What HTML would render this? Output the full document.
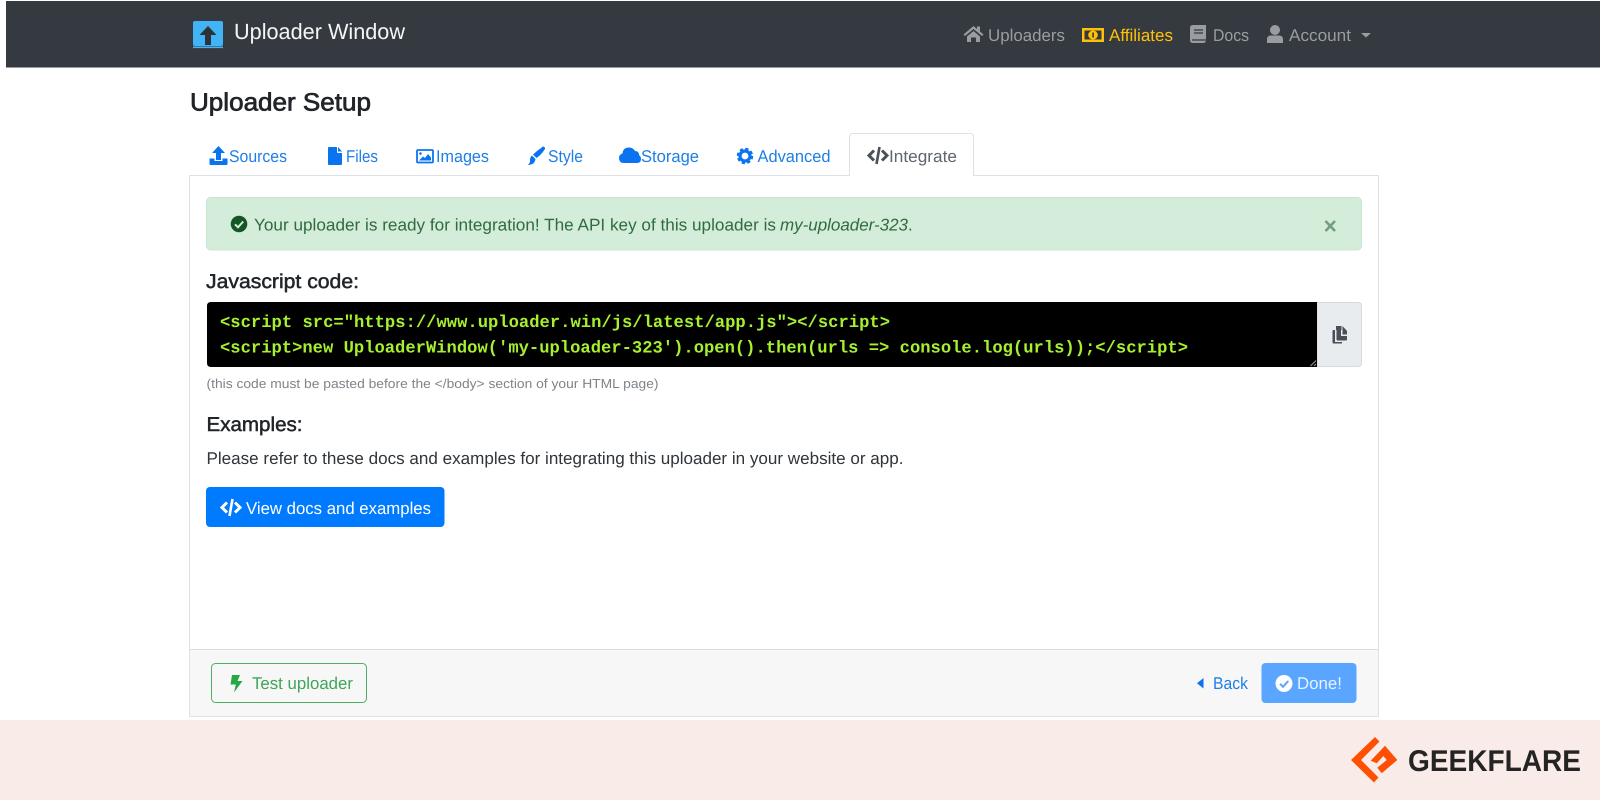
<!DOCTYPE html>
<html lang="en"><head><meta charset="utf-8"><title>Uploader Setup</title>
<style>
html,body{margin:0;padding:0;background:#fff;width:1600px;height:800px;overflow:hidden}
svg{display:block}
text{font-family:"Liberation Sans",sans-serif;font-size:17px;text-rendering:geometricPrecision}
.c{font-family:"Liberation Mono",monospace;font-weight:700;font-size:17.2px;fill:#a6f02f}
.l{fill:#1f7fe6}.n{fill:#9a9da0}.h{fill:#212529;stroke:#212529;stroke-width:.7px}
</style></head><body>
<svg width="1600" height="800" viewBox="0 0 1600 800" xmlns="http://www.w3.org/2000/svg">
<defs><g id="code"><path d="M7 3.500 L2 8.500 L7 13.500 M15 3.500 L20 8.500 L15 13.500" fill="none" stroke="currentColor" stroke-width="3"/><path d="M12.500 0 L9.500 17" stroke="currentColor" stroke-width="2.600"/></g></defs>
<rect width="1600" height="800" fill="#fff"/>
<!-- navbar -->
<rect x="6" y="1" width="1594" height="66.500" fill="#343a40"/>
<rect x="193" y="21" width="30" height="25" rx="2" fill="#42b4f5"/><rect x="193" y="46.500" width="30" height="1.600" fill="#42b4f5"/>
<path d="M208 26 L216.500 35 H211 V45 H205 V35 H199.500 Z" fill="#2b3238"/>
<text x="234" y="39" style="font-size:22px" fill="#f4f5f5" textLength="171" lengthAdjust="spacingAndGlyphs">Uploader Window</text>
<path d="M973.500 26 L977 29 V26.500 H980 V31.500 L983.500 34.500 L982 36 L973.500 29 L965 36 L963.500 34.500 Z M973.500 31 L980 36.500 V42 H976 V37.500 H971 V42 H967 V36.500 Z" fill="#9a9da0"/>
<text class="n" x="988" y="41" textLength="77" lengthAdjust="spacingAndGlyphs">Uploaders</text>
<rect x="1082" y="28" width="22" height="14" fill="#ffc107"/><rect x="1084.500" y="30.500" width="17" height="9" fill="#343a40"/><ellipse cx="1093" cy="35" rx="4.800" ry="4.500" fill="#ffc107"/><rect x="1092.300" y="32.500" width="1.600" height="5" fill="#343a40"/>
<text x="1109" y="41" fill="#ffc107" textLength="64" lengthAdjust="spacingAndGlyphs">Affiliates</text>
<path d="M1193 25 H1206 V40 Q1206 43 1203 43 H1193 Q1190 43 1190 40 V28 Q1190 25 1193 25 Z" fill="#9a9da0"/><path d="M1194 30 H1203 M1194 33 H1203 M1192 40 H1206" stroke="#343a40" stroke-width="1.300"/>
<text class="n" x="1213" y="41" textLength="36" lengthAdjust="spacingAndGlyphs">Docs</text>
<circle cx="1275" cy="30" r="5" fill="#9a9da0"/><path d="M1267 43 V39.500 Q1267 35.500 1271 35.500 H1279 Q1283 35.500 1283 39.500 V43 Z" fill="#9a9da0"/>
<text class="n" x="1289" y="41" textLength="62" lengthAdjust="spacingAndGlyphs">Account</text>
<path d="M1361 33 H1371 L1366 37.500 Z" fill="#9a9da0"/>
<!-- heading -->
<text class="h" x="190" y="110.500" style="font-size:25px" textLength="181" lengthAdjust="spacingAndGlyphs">Uploader Setup</text>
<!-- panel -->
<rect x="189.500" y="175.500" width="1189" height="541" fill="#fff" stroke="#dee2e6"/>
<rect x="190" y="649" width="1188" height="67" fill="#f7f7f7"/><path d="M190 649.500 H1378" stroke="#dcdcdc"/>
<!-- tabs -->
<path d="M849.500 176 V137 Q849.500 133.500 853 133.500 H970 Q973.500 133.500 973.500 137 V176" fill="#fff" stroke="#dee2e6"/>
<path d="M218.500 146 L225 153 H221 V160 H216 V153 H212 Z M209.500 158.500 H214.500 V161 H222.500 V158.500 H227.500 V164 Q227.500 165 226.500 165 H210.500 Q209.500 165 209.500 164 Z" fill="#0a74f0"/>
<text class="l" x="229" y="162" textLength="58" lengthAdjust="spacingAndGlyphs">Sources</text>
<path d="M328 148 Q328 147 329 147 H337 V152 Q337 153 338 153 H342 V164 Q342 165 341 165 H329 Q328 165 328 164 Z M338 147 L342 151.500 H338 Z" fill="#0a74f0"/>
<text class="l" x="346" y="162" textLength="32" lengthAdjust="spacingAndGlyphs">Files</text>
<rect x="417" y="150" width="16" height="12.500" rx="1" fill="none" stroke="#0a74f0" stroke-width="1.800"/><circle cx="420.500" cy="153.500" r="1.300" fill="#0a74f0"/><path d="M419 160.500 L423 156.500 L425 158 L428 154 L431 157.500 V160.500 Z" fill="#0a74f0"/>
<text class="l" x="436" y="162" textLength="53" lengthAdjust="spacingAndGlyphs">Images</text>
<path d="M543 146.500 Q545.500 147 545 149 Q541 155 536.500 158 L533 154.500 Q538 150 543 146.500 Z M532 155.500 L535.500 159 Q535 164 530 164.800 Q528.500 165 528 164.500 Q530.500 163 530 160 Q530 157 532 155.500 Z" fill="#0a74f0"/>
<text class="l" x="548" y="162" textLength="35" lengthAdjust="spacingAndGlyphs">Style</text>
<path d="M624 163 Q619 163 619 158 Q619 154.500 622.500 153.500 Q623 147.500 629 147.500 Q633 147.500 635 151 Q639 151 639 155 Q641 156.500 641 159 Q641 163 637 163 Z" fill="#0a74f0"/>
<text class="l" x="641" y="162" textLength="58" lengthAdjust="spacingAndGlyphs">Storage</text>
<circle cx="745" cy="156" r="5" fill="none" stroke="#0a74f0" stroke-width="3.200"/><circle cx="745" cy="156" r="7" fill="none" stroke="#0a74f0" stroke-width="2.500" stroke-dasharray="3.200 2.300"/>
<text class="l" x="757.500" y="162" textLength="73" lengthAdjust="spacingAndGlyphs">Advanced</text>
<use href="#code" x="867" y="147" color="#495057"/>
<text x="889" y="162" fill="#5f666d" textLength="68" lengthAdjust="spacingAndGlyphs">Integrate</text>
<!-- alert -->
<rect x="206.500" y="197.500" width="1155" height="52.500" rx="4" fill="#d4edda" stroke="#c8e6cf"/>
<circle cx="239" cy="224" r="8.300" fill="#155724"/><path d="M235 224.300 L238 227.300 L243.200 221.500" fill="none" stroke="#d4edda" stroke-width="2"/>
<text x="254" y="230.500" fill="#2f6b3d" textLength="522" lengthAdjust="spacingAndGlyphs">Your uploader is ready for integration! The API key of this uploader is</text>
<text x="780" y="230.500" fill="#2f6b3d" font-style="italic" textLength="128" lengthAdjust="spacingAndGlyphs">my-uploader-323</text>
<text x="908" y="230.500" fill="#2f6b3d">.</text>
<path d="M1325.500 221 L1335 231 M1335 221 L1325.500 231" stroke="#6f9f7c" stroke-width="2.600"/>
<!-- code -->
<text class="h" x="206" y="288" style="font-size:20px;stroke-width:.5px" textLength="153" lengthAdjust="spacingAndGlyphs">Javascript code:</text>
<path d="M1317 302.500 H1358 Q1361.500 302.500 1361.500 306 V363 Q1361.500 366.500 1358 366.500 H1317 Z" fill="#e9ecef" stroke="#d6dade"/>
<path d="M211 302 H1317 V367 H211 Q207 367 207 363 V306 Q207 302 211 302 Z" fill="#000"/>
<path d="M1310.500 366 L1316 360.500 M1314 366 L1316 364" stroke="#9a9a9a" stroke-width="1"/>
<text class="c" x="220" y="327" textLength="670" lengthAdjust="spacingAndGlyphs">&lt;script src="https://www.uploader.win/js/latest/app.js"&gt;&lt;/script&gt;</text>
<text class="c" x="220" y="352.500" textLength="968" lengthAdjust="spacingAndGlyphs">&lt;script&gt;new UploaderWindow('my-uploader-323').open().then(urls =&gt; console.log(urls));&lt;/script&gt;</text>
<path d="M1336.500 330 H1341 V336 H1347 V339.500 Q1347 340.500 1346 340.500 H1337.500 Q1336.500 340.500 1336.500 339.500 Z M1342.500 326 L1347 331 V334.500 H1342.500 Z" fill="#495057"/><path d="M1335 330 H1333.500 Q1332.500 330 1332.500 331 V342.500 Q1332.500 343.500 1333.500 343.500 H1342 V342 H1335 Z" fill="#495057"/><path d="M1336 326 H1341.500 V330 H1336 Z" fill="#495057"/>
<text x="206.500" y="388" style="font-size:13px" fill="#7d848a" textLength="452" lengthAdjust="spacingAndGlyphs">(this code must be pasted before the &lt;/body&gt; section of your HTML page)</text>
<text class="h" x="206.500" y="431" style="font-size:20px;stroke-width:.5px" textLength="96" lengthAdjust="spacingAndGlyphs">Examples:</text>
<text x="206.500" y="464" fill="#30353a" textLength="697" lengthAdjust="spacingAndGlyphs">Please refer to these docs and examples for integrating this uploader in your website or app.</text>
<rect x="206" y="487" width="238.500" height="40" rx="4" fill="#007bff"/>
<use href="#code" x="220" y="499" color="#fff"/>
<text x="246" y="514" fill="#fff" textLength="185" lengthAdjust="spacingAndGlyphs">View docs and examples</text>
<!-- footer -->
<rect x="211.500" y="663.500" width="155" height="39" rx="4" fill="none" stroke="#4fae66"/>
<path d="M232 675 H240 L237.500 681 H242.500 L234 692.500 L235.800 684.500 H230.500 Z" fill="#28a745"/>
<text x="252" y="689" fill="#3fa65a" textLength="101" lengthAdjust="spacingAndGlyphs">Test uploader</text>
<path d="M1203.500 678 V688.500 L1197 683.300 Z" fill="#0a74f0"/>
<text class="l" x="1213" y="689" textLength="35" lengthAdjust="spacingAndGlyphs">Back</text>
<rect x="1261.500" y="663" width="95" height="40" rx="4" fill="#5aa5ff"/>
<circle cx="1284" cy="683.500" r="8.500" fill="#fff"/><path d="M1280 683.800 L1283 686.800 L1288.300 681" fill="none" stroke="#5aa5ff" stroke-width="2"/>
<text x="1297" y="689" fill="#fff" fill-opacity=".85" textLength="45" lengthAdjust="spacingAndGlyphs">Done!</text>
<!-- brand band -->
<rect x="0" y="720" width="1600" height="80" fill="#f8ebe8"/>
<path d="M1375 737 L1379.500 741.500 L1361 760 L1378.500 777.500 L1374 782.500 L1351 760 Z" fill="#ff4f03"/>
<path d="M1370.700 760.700 L1385 745.700 L1397.300 760 L1381.700 773.300 L1377.300 767.700 L1386.700 760 L1383.300 756 L1376.700 763.300 Z" fill="#ff4f03"/>
<text x="1408" y="771" style="font-size:30px;font-weight:700" fill="#242424" textLength="173" lengthAdjust="spacingAndGlyphs">GEEKFLARE</text>
</svg>
</body></html>
